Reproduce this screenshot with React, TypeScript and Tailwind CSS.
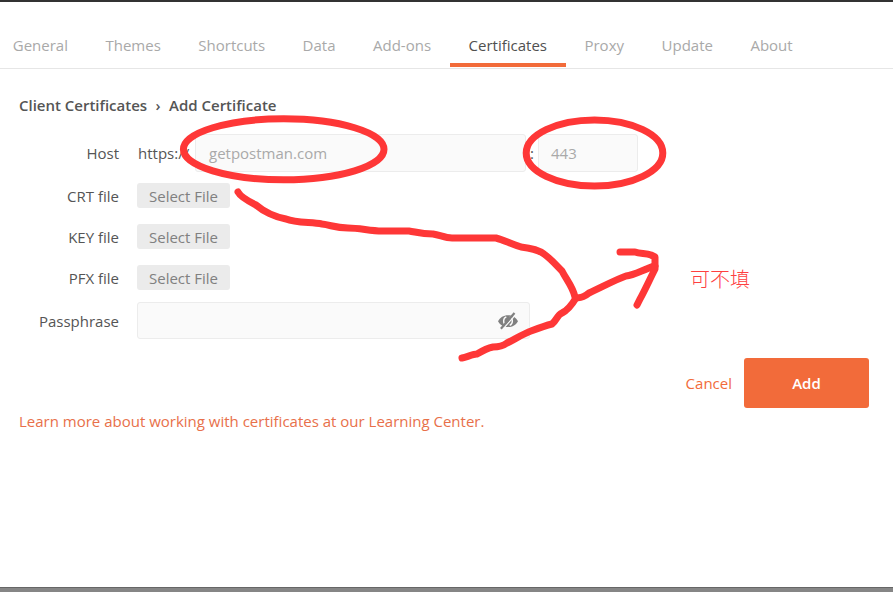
const tabs = ['General', 'Themes', 'Shortcuts', 'Data', 'Add-ons', 'Certificates', 'Proxy', 'Update', 'About'];

function Tab({ label, active }: { label: string; active: boolean }) {
  return (
    <div
      className={
        active
          ? 'h-[65px] border-b-4 border-[#f26b3a] px-[18.75px] pt-[32px] text-[#505050]'
          : 'h-[65px] border-b-4 border-transparent px-[18.75px] pt-[32px] text-[#a9a9a9]'
      }
    >
      {label}
    </div>
  );
}

function Label({ children }: { children: string }) {
  return <div className="w-[119px] shrink-0 text-right">{children}</div>;
}

function FileRow({ label }: { label: string }) {
  return (
    <div className="flex h-[25px] items-center">
      <Label>{label}</Label>
      <button className="ml-[18px] h-[25px] w-[93px] rounded-[3px] bg-[#ebebeb] text-[#808080]">Select File</button>
    </div>
  );
}

function HiddenEye() {
  return (
    <svg className="mt-px" width="20" height="18" viewBox="0 0 20 18" fill="none">
      <path d="M0 9.2C2 5.500 5.500 3.200 10 3.200S18 5.500 20 9.200C18 12.800 14.500 15 10 15S2 12.800 0 9.200Z" fill="#808080" />
      <path d="M8.300 4.800C4.800 6.200 4.700 11.900 8.300 13.400M11.700 4.800C15.200 6.200 15.300 11.900 11.700 13.400" stroke="#fafafa" strokeWidth="1.400" />
      <path d="M4.600 17.400L18.200 2" stroke="#fafafa" strokeWidth="1.300" />
      <path d="M2.900 16.800L16.500 1" stroke="#808080" strokeWidth="2.200" />
    </svg>
  );
}

function Annotations() {
  return (
    <svg className="pointer-events-none absolute -top-[2px] left-0" width="893" height="592" viewBox="0 0 893 592" fill="none" stroke="#fe3737" strokeWidth="7" strokeLinecap="round" strokeLinejoin="round">
      <ellipse cx="283.700" cy="149.300" rx="100.300" ry="30.500" />
      <ellipse cx="594.500" cy="153" rx="68.300" ry="33" />
      <path d="M238 192C240 196 246 200 256 205C263 211 275 217 286 219C296 223 311 222 322 224C331 225 335 228 348 228C360 228 370 231 382 231H409C416 232 421 234 433 234C440 235 445 238 452 238H496C504 240 511 244 521 247C530 248 540 251 544 254C551 259 557 266 562 271C566 279 573 287 575 297C580 299 584 297 589 293C602 287 617 279 626 276C635 275 644 269 655 266" />
      <path d="M462 358C467 357 473 354 477 354C482 351 488 348 493 347C499 347 503 346 507 343C515 339 525 333 531 331C539 328 548 325 552 324C557 320 557 315 562 313C568 310 573 303 576 298" />
      <path d="M620 252H635C640 254 646 253 651 255L655 257V269C649 281 643 294 640 299L637 305" />
    </svg>
  );
}

export default function App() {
  return (
    <div className="relative flex h-[592px] w-[893px] flex-col overflow-hidden border-t-2 border-[#333] bg-white font-['Open_Sans','Noto_Sans',sans-serif] text-[15px] leading-[22px] text-[#555]">
      <nav className="flex h-[67px] shrink-0 border-b border-[#e6e6e6]">
        <div className="-ml-[6px] flex">
          {tabs.map((tab) => (
            <Tab key={tab} label={tab} active={tab === 'Certificates'} />
          ))}
        </div>
      </nav>

      <main className="flex-1">
        <div className="flex pl-[19px] pt-[25px] font-semibold tracking-[-0.01px]">
          <span>Client Certificates</span>
          <span className="w-[22px] text-center">›</span>
          <span>Add Certificate</span>
        </div>

        <div className="mt-[18px] flex h-[38px] items-center">
          <Label>Host</Label>
          <span className="ml-[19px] w-[57px]">https://</span>
          <div className="flex h-[38px] w-[331px] items-center rounded-[3px] border border-[#ececec] bg-[#fafafa] pl-[13px] text-[#a9a9a9]">getpostman.com</div>
          <span className="w-[12px] text-center">:</span>
          <div className="flex h-[38px] w-[100px] items-center rounded-[3px] border border-[#ececec] bg-[#fafafa] pl-[12px] text-[#a9a9a9]">443</div>
        </div>

        <div className="mt-[11px] flex flex-col gap-[16px]">
          <FileRow label="CRT file" />
          <FileRow label="KEY file" />
          <FileRow label="PFX file" />
        </div>

        <div className="mt-[12px] flex h-[37px] items-center">
          <Label>Passphrase</Label>
          <div className="ml-[18px] flex h-[37px] w-[393px] items-center justify-end rounded-[3px] border border-[#ececec] bg-[#fafafa] pr-[11px]">
            <HiddenEye />
          </div>
        </div>

        <div className="mt-[19px] flex h-[50px] items-center justify-end pr-[24px]">
          <button className="mr-[12px] text-[#f26b3a]">Cancel</button>
          <button className="h-[50px] w-[125px] rounded-[3px] bg-[#f26b3a] font-semibold text-white">Add</button>
        </div>
        <a className="ml-[19px] mt-[2px] block text-[#e8704a]">Learn more about working with certificates at our Learning Center.</a>
      </main>

      <footer className="h-[5px] shrink-0 border-t border-[#666] bg-[#868686]" />
      <Annotations />
      <span className="absolute left-[690px] top-[265px] font-['Liberation_Serif','Noto_Sans_CJK_SC',serif] text-[20px] font-light leading-[26px] text-[#fe4040]">可不填</span>
    </div>
  );
}
